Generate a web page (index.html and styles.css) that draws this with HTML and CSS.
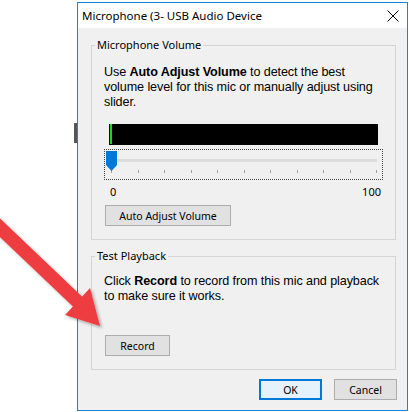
FILE: index.html
```html
<!DOCTYPE html>
<html lang="en">
<head>
    <meta charset="UTF-8">
    <title>Microphone (3- USB Audio Device</title>
    <link rel="stylesheet" href="styles.css">
</head>
<body>
    <div class="backdrop-edge"></div>

    <div class="dialog">
        <div class="titlebar">
            <span class="title">Microphone (3- USB Audio Device</span>
            <svg class="close" width="12" height="12" viewBox="0 0 12 12">
                <path d="M0.5 0.5 L11.5 11.5 M11.5 0.5 L0.5 11.5" stroke="#000" stroke-width="1" fill="none"/>
            </svg>
        </div>

        <div class="dialog-body">
            <fieldset class="group">
                <legend>Microphone Volume</legend>
                <div class="group-body">
                    <p class="info">Use <b>Auto Adjust Volume</b> to detect the best<br>volume level for this mic or manually adjust using<br>slider.</p>

                    <div class="meter"><span class="meter-level"></span></div>

                    <div class="slider">
                        <svg class="thumb" width="11" height="20" viewBox="0 0 11 20">
                            <polygon points="0,0 11,0 11,14 5.5,20 0,14" fill="#0078d7"/>
                        </svg>
                        <div class="track"></div>
                        <div class="ticks">
                            <span></span><span></span><span></span><span></span><span></span><span></span>
                            <span></span><span></span><span></span><span></span><span></span>
                        </div>
                    </div>
                    <div class="scale">
                        <span>0</span>
                        <span>100</span>
                    </div>

                    <button class="win-btn auto-btn">Auto Adjust Volume</button>
                </div>
            </fieldset>

            <fieldset class="group group-playback">
                <legend>Test Playback</legend>
                <div class="group-body">
                    <p class="info">Click <b>Record</b> to record from this mic and playback<br>to make sure it works.</p>
                    <button class="win-btn record-btn">Record</button>
                </div>
            </fieldset>

            <div class="footer">
                <button class="win-btn default-btn">OK</button>
                <button class="win-btn">Cancel</button>
            </div>
        </div>
    </div>

    <!-- red annotation arrow drawn over the screenshot -->
    <svg class="arrow" width="130" height="150" viewBox="0 200 130 150">
        <defs>
            <filter id="shadow" x="-20%" y="-20%" width="140%" height="140%">
                <feDropShadow dx="2" dy="2" stdDeviation="1.5" flood-color="#000" flood-opacity="0.3"/>
            </filter>
        </defs>
        <g filter="url(#shadow)" fill="#ee3d3f">
            <polygon points="-1.5,217 83.5,298 74.5,308 -10.5,227"/>
            <polygon points="65,315 90,288 100,326"/>
        </g>
    </svg>
</body>
</html>
```

FILE: styles.css
```css
body {
    margin: 0;
    background-color: #fff;
    font-family: "Noto Sans", "Open Sans", sans-serif;
    font-size: 12px;
    color: #000;
}

.backdrop-edge {
    position: absolute;
    left: 74px;
    top: 123px;
    width: 3px;
    height: 20px;
    background-color: #555;
}

.dialog {
    width: 331px;
    height: 409px;
    margin: 2px 0 0 77px;
    box-sizing: border-box;
    border: 1px solid #1883d7;
    display: flex;
    flex-direction: column;
}

.titlebar {
    height: 25px;
    background-color: #fff;
    display: flex;
    align-items: center;
    justify-content: space-between;
    padding: 0 8px 0 4px;
    font-size: 11.5px;
}

.close {
    display: block;
}

.dialog-body {
    flex: 1;
    background-color: #f0f0f0;
    padding: 9px 11px 0 13px;
}

.group {
    margin: 0;
    padding: 0;
    min-width: 0;
    border: 1px solid #d5d5d5;
}

.group legend {
    margin-left: 3px;
    padding: 0 2px;
    line-height: 16px;
    font-size: 11px;
}

.group-body {
    padding: 12px 12px 13px 12px;
}

.group-playback {
    margin-top: 8px;
}

.group-playback .group-body {
    padding-top: 10px;
}

.info {
    margin: 0;
    font-family: "Liberation Sans", Arial, sans-serif;
    font-size: 12.6px;
    letter-spacing: -0.1px;
    line-height: 15px;
    white-space: nowrap;
}

.meter {
    width: 269px;
    height: 21px;
    margin: 14px 0 0 5px;
    background-color: #000;
}

.meter-level {
    display: block;
    width: 2px;
    height: 20px;
    margin-left: 1px;
    background-color: #1ed41e;
}

.slider {
    position: relative;
    width: 279px;
    height: 31px;
    margin-top: 4px;
    box-sizing: border-box;
    border: 1px dotted #444;
}

.thumb {
    position: absolute;
    left: 1px;
    top: 1px;
}

.track {
    height: 3px;
    margin: 9px 5px 0 5px;
    background-color: #dcdcdc;
}

.ticks {
    display: flex;
    justify-content: space-between;
    margin: 8px 5px 0 6px;
}

.ticks span {
    width: 1px;
    height: 3px;
    background-color: #a0a0a0;
}

.scale {
    width: 279px;
    box-sizing: border-box;
    display: flex;
    justify-content: space-between;
    margin-top: 5px;
    padding: 0 2px 0 6px;
    font-size: 11px;
    line-height: 14px;
}

.win-btn {
    height: 21px;
    padding: 0;
    border: 1px solid #adadad;
    background-color: #e1e1e1;
    font-family: "Noto Sans", "Open Sans", sans-serif;
    font-size: 10.5px;
    color: #000;
}

.auto-btn {
    width: 126px;
    margin: 6px 0 0 1px;
}

.record-btn {
    display: block;
    width: 65px;
    margin: 31px 0 0 1px;
}

.footer {
    display: flex;
    justify-content: flex-end;
    gap: 12px;
    margin: 9px -1px 0 0;
}

.footer .win-btn {
    width: 63px;
}

.default-btn {
    border: 2px solid #0078d7;
    background-color: #e5f1fb;
}

.arrow {
    position: absolute;
    left: 0;
    top: 200px;
    overflow: visible;
}
```
